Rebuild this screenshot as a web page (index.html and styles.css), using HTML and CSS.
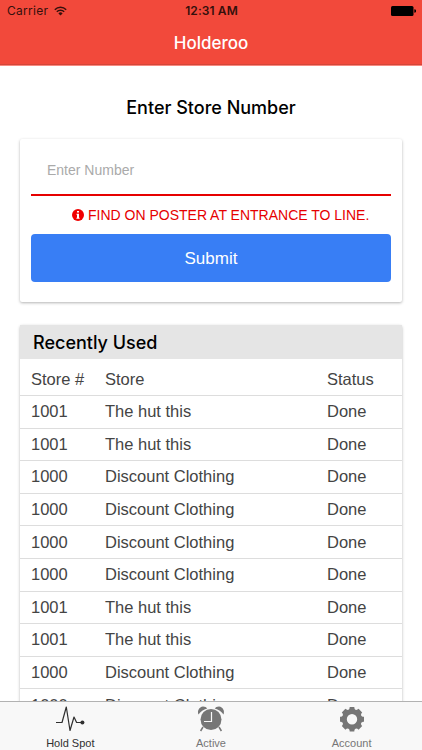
FILE: index.html
```html
<!DOCTYPE html>
<html lang="en">
<head>
<meta charset="utf-8">
<title>Holderoo</title>
<link rel="stylesheet" href="styles.css">
</head>
<body>
<div class="app">
  <header class="header">
    <div class="status">
      <div class="carrier"><span class="carrier-name">Carrier</span>
        <svg class="wifi" viewBox="0 0 13 10"><path d="M.8 3.7a8 8 0 0 1 11.4 0M2.8 5.8a5.2 5.2 0 0 1 7.4 0" fill="none" stroke="currentColor" stroke-width="1.5"/><path d="M4.4 7.4a3 3 0 0 1 4.2 0L6.500 9.500z" fill="currentColor"/></svg>
      </div>
      <span class="time">12:31 AM</span>
      <svg class="battery" viewBox="0 0 25 10"><rect width="22.500" height="10" rx="1.500"/><path d="M23.300 3.200a1.800 1.800 0 0 1 0 3.600z"/></svg>
    </div>
    <div class="title"><span>Holderoo</span></div>
  </header>
  <main class="content">
    <h1 class="heading"><span>Enter Store Number</span></h1>
    <section class="card form">
      <div class="field"><span>Enter Number</span></div>
      <div class="hint">
        <svg class="info" viewBox="0 0 12 12"><circle cx="6" cy="6" r="6" fill="#f00000"/><path d="M5 2h2v1.500H5zM4.500 4.700H7v4h.6v1.100H4.400V8.700H5V5.800h-.5z" fill="#fff"/></svg>
        <span class="hint-text">FIND ON POSTER AT ENTRANCE TO LINE.</span>
      </div>
      <div class="submit"><span>Submit</span></div>
    </section>
    <section class="card recent">
      <h2 class="recent-title"><span>Recently Used</span></h2>
      <div class="row labels"><span>Store #</span><span>Store</span><span>Status</span></div>
      <div class="row"><span>1001</span><span>The hut this</span><span>Done</span></div>
      <div class="row"><span>1001</span><span>The hut this</span><span>Done</span></div>
      <div class="row"><span>1000</span><span>Discount Clothing</span><span>Done</span></div>
      <div class="row"><span>1000</span><span>Discount Clothing</span><span>Done</span></div>
      <div class="row"><span>1000</span><span>Discount Clothing</span><span>Done</span></div>
      <div class="row"><span>1000</span><span>Discount Clothing</span><span>Done</span></div>
      <div class="row"><span>1001</span><span>The hut this</span><span>Done</span></div>
      <div class="row"><span>1001</span><span>The hut this</span><span>Done</span></div>
      <div class="row"><span>1000</span><span>Discount Clothing</span><span>Done</span></div>
      <div class="row"><span>1000</span><span>Discount Clothing</span><span>Done</span></div>
    </section>
  </main>
  <nav class="tabs">
    <div class="tab active">
      <svg class="icon" viewBox="0 0 32 28"><path d="M2 17.500h6L12.300 2 16 25.500 20 12l2.600 5.500H27" fill="none" stroke="currentColor" stroke-width="1.200" stroke-linejoin="round"/><circle cx="28.400" cy="17.500" r="2" fill="currentColor"/></svg>
      <span>Hold Spot</span>
    </div>
    <div class="tab">
      <svg class="icon" viewBox="0 0 32 28"><g fill="currentColor"><circle cx="16" cy="14.500" r="10.500"/><path d="M3.500 9.500C2 6 4 2 8 1.500c2 0 3.500.8 4.200 2C8.500 4.500 5.500 6.800 3.500 9.500zM28.500 9.500C30 6 28 2 24 1.500c-2 0-3.500.8-4.200 2 3.700 1 6.700 3.300 8.700 6z"/></g><path d="M8 22l-2.400 4M24 22l2.400 4" stroke="currentColor" stroke-width="1.500"/><path d="M16.500 7v9.500H9" fill="none" stroke="#f8f8f8" stroke-width="1.200"/></svg>
      <span>Active</span>
    </div>
    <div class="tab">
      <svg class="icon" viewBox="0 0 32 28"><path fill="currentColor" fill-rule="evenodd" d="M13.700 2h4.600c0 3 2.200 3.900 4.300 1.800l3.600 3.600c-2.100 2.100-1.200 4.300 1.800 4.300v5.100c-3 0-3.900 2.200-1.800 4.300l-3.600 3.600c-2.100-2.100-4.300-1.200-4.300 1.800h-4.600c0-3-2.200-3.900-4.300-1.800l-3.600-3.600C7.900 19 7 16.800 4 16.800v-5.100c3 0 3.900-2.200 1.800-4.300l3.600-3.600C11.500 5.900 13.700 5 13.700 2zM16 9a5.200 5.200 0 1 0 0 10.400A5.200 5.200 0 0 0 16 9z"/></svg>
      <span>Account</span>
    </div>
  </nav>
</div>
</body>
</html>
```
FILE: styles.css
```css
* { box-sizing: border-box; }
body { margin: 0; background: #fff; font-family: "Liberation Sans", Arial, sans-serif; color: #444; }
.app { width: 422px; height: 750px; display: flex; flex-direction: column; overflow: hidden; }
.header { flex: none; height: 66px; background: #f2493b; border-bottom: 1px solid #f98a80; box-shadow: inset 0 -1px #d4463a; }
.status { height: 22px; display: grid; grid-template-columns: 1fr auto 1fr; align-items: center; padding: 0 6px 0 7px; color: #35100c; font: 12px/22px Inter, sans-serif; }
.carrier { display: flex; align-items: center; gap: 6px; }
.carrier-name { letter-spacing: .3px; }
.wifi { width: 13px; height: 10px; }
.time { font-weight: 600; letter-spacing: .1px; }
.battery { width: 25px; height: 10px; justify-self: end; fill: #000; }
.title { height: 43px; text-align: center; color: #fff; font: 500 17px/43px Inter, sans-serif; }
.content { flex: 1; min-height: 0; padding: 0 20px; overflow: hidden; }
.heading { margin: 0; height: 73px; padding-top: 31px; text-align: center; color: #000; font: 500 18px/22px Inter, sans-serif; }
.card { background: #fff; border-radius: 2px; box-shadow: 0 1px 3px rgba(0, 0, 0, .3); }
.form { height: 163px; padding: 0 11px; display: flex; flex-direction: column; }
.field { height: 57px; padding: 21px 16px 0; border-bottom: 2px solid #e60000; color: #aaa; font-size: 14px; line-height: 20px; }
.hint { height: 38px; padding-left: 41px; display: flex; align-items: center; gap: 4px; color: #e60000; font-size: 14px; }
.info { width: 12px; height: 12px; }
.submit { height: 48px; border-radius: 4px; background: #387ef5; color: #fff; text-align: center; font-size: 17px; line-height: 49px; }
.recent { margin-top: 23px; }
.recent-title { margin: 0; height: 34px; padding-left: 13px; background: #e5e5e5; color: #000; font: 500 18px/35px Inter, sans-serif; }
.row { height: 32.600px; padding-left: 11px; display: grid; grid-template-columns: 74px 222px 1fr; align-items: center; border-bottom: 1px solid #ddd; font-size: 16.500px; }
.labels { height: 37px; padding-top: 5px; }
.tabs { flex: none; height: 49px; display: grid; grid-template-columns: repeat(3, 1fr); background: #f8f8f8; border-top: 1px solid #b2b2b2; }
.tab { display: flex; flex-direction: column; align-items: center; color: #767676; font: 11px/13px "Liberation Sans", Arial, sans-serif; padding-top: 3px; }
.active { color: #303030; }
.icon { width: 32px; height: 28px; margin-bottom: 4px; }
```
